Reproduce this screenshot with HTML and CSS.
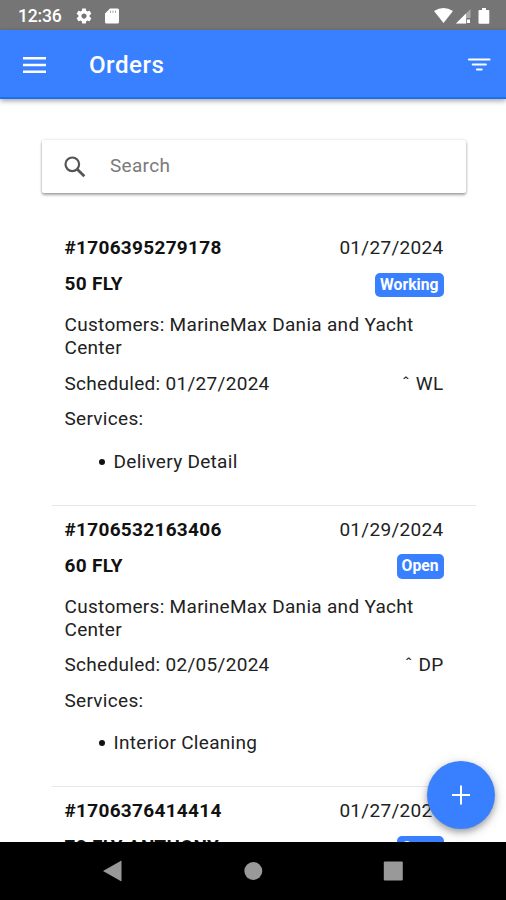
FILE: index.html
```html
<!DOCTYPE html>
<html lang="en">
<head>
<meta charset="utf-8">
<title>Orders</title>
<link rel="stylesheet" href="styles.css">
</head>
<body>
<div class="screen">
  <div class="statusbar">
    <span class="time">12:36</span>
    <svg class="gear" width="18" height="18" viewBox="0 0 24 24"><path fill="#fff" d="M19.43 12.98c.04-.32.07-.64.07-.98s-.03-.66-.07-.98l2.11-1.65c.19-.15.24-.42.12-.64l-2-3.46c-.12-.22-.39-.3-.61-.22l-2.49 1c-.52-.4-1.08-.73-1.69-.98l-.38-2.65C14.46 2.18 14.25 2 14 2h-4c-.25 0-.46.18-.49.42l-.38 2.65c-.61.25-1.17.59-1.69.98l-2.49-1c-.23-.09-.49 0-.61.22l-2 3.46c-.13.22-.07.49.12.64l2.11 1.65c-.04.32-.07.65-.07.98s.03.66.07.98l-2.11 1.65c-.19.15-.24.42-.12.64l2 3.46c.12.22.39.3.61.22l2.49-1c.52.4 1.08.73 1.69.98l.38 2.65c.03.24.24.42.49.42h4c.25 0 .46-.18.49-.42l.38-2.65c.61-.25 1.17-.59 1.69-.98l2.49 1c.23.09.49 0 .61-.22l2-3.46c.12-.22.07-.49-.12-.64l-2.11-1.65zM12 15.5c-1.93 0-3.5-1.57-3.5-3.5s1.57-3.500 3.500-3.500 3.500 1.570 3.500 3.500-1.570 3.500-3.500 3.500z"/></svg>
    <svg class="card" width="14" height="16" viewBox="0 0 14 16"><path fill="#fff" d="M5 .5h7.5A1.5 1.5 0 0 1 14 2v12a1.500 1.500 0 0 1-1.500 1.500h-11A1.500 1.500 0 0 1 0 14V5.500z"/><path stroke="#aaa" stroke-width="1" d="M5.500 2.500v2.500M8 2.500v2.500M10.500 2.500v2.500"/></svg>
    <svg class="signals" width="60" height="20" viewBox="0 0 60 20"><path fill="#fff" d="M0 5Q9.500-1 19 5L9.500 17z"/><path fill="#aaa" d="M36.500 3v9h-4v5.500H22z"/><path fill="#fff" d="M22 17.500 32 7.500v10z"/><path fill="#fff" d="M33 13.500h3v3.500h-3z"/><path fill="#fff" d="M45.500 4H48V2h4v2h2.500q.8 0 .8.800v12q0 .9-.9.900h-9q-.9 0-.9-.9v-12q0-.8 1-.8z"/></svg>
  </div>
  <header class="appbar">
    <svg class="menu" width="23" height="16" viewBox="0 0 23 16"><path stroke="#fff" stroke-width="2.600" d="M0 1.300h23M0 8h23M0 14.700h23"/></svg>
    <h1 class="title">Orders</h1>
    <svg class="filter" width="24" height="14" viewBox="0 0 24 14"><path stroke="#fff" stroke-width="2.200" stroke-linecap="round" d="M2 1.500h20.500M5.800 6.500h13M10 11.500h4.600"/></svg>
  </header>
  <main class="content">
    <div class="search">
      <svg width="22" height="22" viewBox="0 0 22 22"><circle cx="8.300" cy="8.300" r="6.800" fill="none" stroke="#555" stroke-width="2.200"/><path stroke="#555" stroke-width="2.800" d="m13 13 7.300 7.300"/></svg>
      <span class="hint">Search</span>
    </div>
    <section class="orders">
      <article class="order">
        <div class="row"><b>#1706395279178</b><span>01/27/2024</span></div>
        <div class="row name"><b>50 FLY</b><span class="badge">Working</span></div>
        <p class="customers">Customers: MarineMax Dania and Yacht Center</p>
        <div class="row"><span>Scheduled: 01/27/2024</span><span><span class="caret">ˆ</span> WL</span></div>
        <p class="services">Services:</p>
        <ul class="list"><li>Delivery Detail</li></ul>
      </article>
      <article class="order">
        <div class="row"><b>#1706532163406</b><span>01/29/2024</span></div>
        <div class="row name"><b>60 FLY</b><span class="badge">Open</span></div>
        <p class="customers">Customers: MarineMax Dania and Yacht Center</p>
        <div class="row"><span>Scheduled: 02/05/2024</span><span><span class="caret">ˆ</span> DP</span></div>
        <p class="services">Services:</p>
        <ul class="list"><li>Interior Cleaning</li></ul>
      </article>
      <article class="order">
        <div class="row"><b>#1706376414414</b><span>01/27/2024</span></div>
        <div class="row name"><b>70 FLY ANTHONY</b><span class="badge">Open</span></div>
      </article>
    </section>
    <div class="fab"><svg width="18" height="20" viewBox="0 0 18 20"><path stroke="#fff" stroke-width="2" d="M0 10h18M9 .500v19"/></svg></div>
  </main>
  <nav class="navbar">
    <svg width="20" height="22" viewBox="0 0 20 22"><path fill="#999" d="M18.500 .500v21L0 11z"/></svg>
    <svg width="20" height="20" viewBox="0 0 20 20"><circle cx="10.300" cy="10" r="9" fill="#999"/></svg>
    <svg width="20" height="20" viewBox="0 0 20 20"><rect x=".8" y=".5" width="19" height="19" rx="1" fill="#999"/></svg>
  </nav>
</div>
</body>
</html>
```
FILE: styles.css
```css
* { box-sizing: border-box; }
body { margin: 0; font-family: Roboto, sans-serif; color: #222; background: #fff; }
h1, p, ul { margin: 0; padding: 0; }
svg { display: block; flex: none; }
.screen { width: 506px; height: 900px; display: flex; flex-direction: column; overflow: hidden; }
.statusbar { height: 30px; flex: none; background: #757575; color: #fff; display: flex; align-items: center; padding: 1px 14px 0 18px; }
.time { font-size: 17.6px; font-weight: 500; width: 57px; letter-spacing: -.2px; }
.card { margin-left: 12px; }
.signals { margin-left: auto; margin-right: -2px; }
.appbar { height: 69px; flex: none; background: #3880ff; border-bottom: 2px solid #1c70ee; display: flex; align-items: center; padding: 2px 15px 0 23px; color: #fff; box-shadow: 0 2px 5px rgba(0,0,0,.36); position: relative; z-index: 1; }
.title { font-size: 24.2px; font-weight: 500; margin-left: 43px; letter-spacing: .45px; padding-top: 1px; }
.filter { margin-left: auto; }
.content { height: 743px; flex: none; overflow: hidden; position: relative; padding-top: 41px; }
.search { width: 424px; height: 53px; margin-left: 42px; border-radius: 2px; box-shadow: 0 2px 3px rgba(0,0,0,.34), 0 0 3px rgba(0,0,0,.14); display: flex; align-items: center; padding: 0 22px; gap: 24px; font-size: 19px; letter-spacing: .3px; color: #7a7a7a; }
.hint { padding-bottom: 2px; }
.orders { margin: 31px 30px 0 52px; font-size: 19px; line-height: 23px; letter-spacing: .3px; }
.order { height: 281.7px; padding: 12px 32.500px 0 12.500px; border-bottom: 1.500px solid #e8e8e8; }
.row { display: flex; justify-content: space-between; }
.order b { font-weight: 700; color: #111; }
.name { margin-top: 13px; align-items: center; height: 23px; }
.badge { background: #3880ff; color: #fff; font-size: 15.7px; font-weight: 700; line-height: 24px; height: 24.500px; padding: 0 5px; border-radius: 5px; letter-spacing: 0; position: relative; top: 1.500px; }
.customers { margin: 18px 0 12.500px; }
.services { margin-top: 12.500px; }
.list { margin-top: 19.500px; padding-left: 49px; list-style: none; }
.list li::before { content: ""; float: left; width: 6px; height: 6px; margin: 9px 0 0 -15px; border-radius: 50%; background: #111; }
.fab { position: absolute; left: 427px; top: 662px; width: 68px; height: 68px; border-radius: 50%; background: #3880ff; box-shadow: 0 3px 6px rgba(0,0,0,.3), 0 3px 14px rgba(0,0,0,.14); display: flex; align-items: center; justify-content: center; }
.navbar { height: 58px; flex: none; background: #000; display: flex; justify-content: space-between; align-items: center; padding: 0 103px; }
```
